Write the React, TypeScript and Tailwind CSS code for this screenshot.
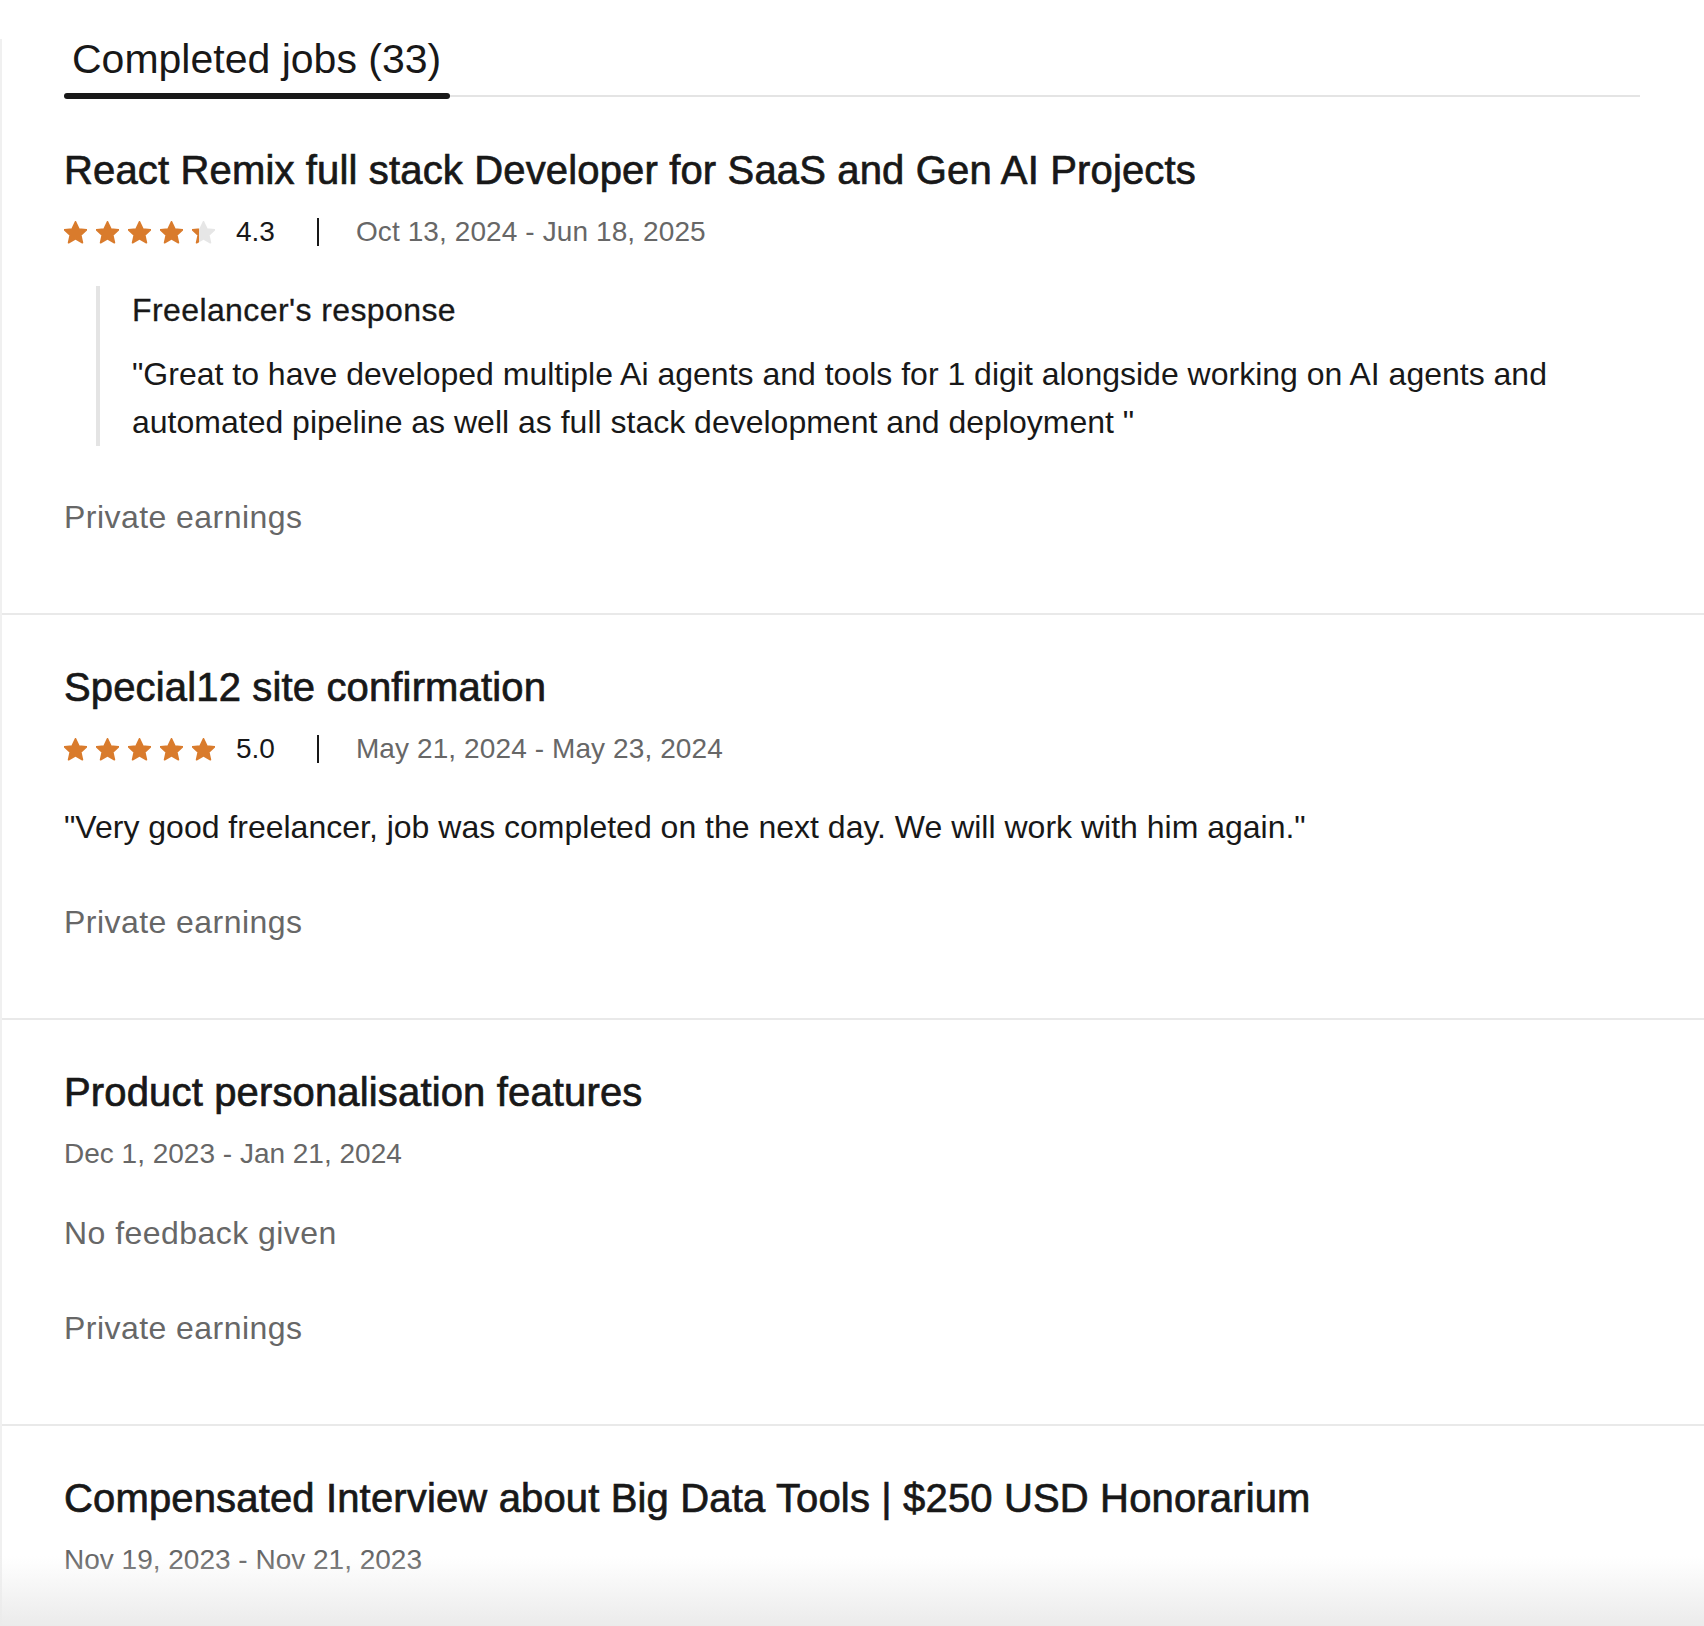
import React from "react";

const STAR = "M12 2.6l2.75 5.95 6.5.72-4.86 4.38 1.37 6.4L12 16.8l-5.76 3.25 1.37-6.4-4.86-4.38 6.5-.72z";

function Star({ fill, id }: { fill: number; id: string }) {
  return (
    <svg width="23" height="23" viewBox="2.4 2.4 19.2 18.2" className="block">
      <defs>
        <linearGradient id={id} x1="0" x2="1" y1="0" y2="0">
          <stop offset={`${fill * 100}%`} stopColor="#d97b2c" />
          <stop offset={`${fill * 100}%`} stopColor="#e6e6e6" />
        </linearGradient>
      </defs>
      <path d={STAR} fill={`url(#${id})`} stroke={`url(#${id})`} strokeWidth="1.4" strokeLinejoin="round" />
    </svg>
  );
}

function Stars({ rating, prefix }: { rating: number; prefix: string }) {
  return (
    <div className="flex items-center gap-[9px]">
      {[0, 1, 2, 3, 4].map((i) => {
        const f = Math.max(0, Math.min(1, rating - i));
        return <Star key={i} fill={f} id={`${prefix}-${i}`} />;
      })}
    </div>
  );
}

function RatingRow({ rating, label, dates, prefix }: { rating: number; label: string; dates: string; prefix: string }) {
  return (
    <div className="mt-[18px] flex h-[40px] items-center">
      <Stars rating={rating} prefix={prefix} />
      <span className="ml-[21px] text-[28px] leading-[40px] text-[#181818]">{label}</span>
      <span className="ml-[42px] h-[28px] w-[2px] bg-[#181818]" />
      <span className="ml-[37px] text-[28px] leading-[40px] tracking-[0.1px] text-[#676767]">{dates}</span>
    </div>
  );
}

function Title({ children }: { children: React.ReactNode }) {
  return (
    <h4 className="text-[40px] leading-[48px] tracking-[0.15px] text-[#181818] [-webkit-text-stroke:0.7px_#181818]">
      {children}
    </h4>
  );
}

function Earnings() {
  return <p className="mt-[47px] text-[32px] leading-[48px] tracking-[0.45px] text-[#676767]">Private earnings</p>;
}

export default function App() {
  return (
    <div className="relative h-[1626px] w-[1704px] overflow-hidden bg-white font-['Liberation_Sans',Arial,sans-serif]">
      <div className="mt-[39px] h-[1587px] border-l-2 border-[#f0f0f0]">
        {/* Section 1 */}
        <section className="border-b-2 border-[#e9e9e9] pb-[72px] pl-[62px] pr-[64px]">
          <div className="flex border-b-2 border-[#e4e4e4]">
            <div className="relative pb-[16px] pl-[8px] pr-[9px] text-[41px] leading-[40px] text-[#181818]">
              Completed jobs (33)
              <span className="absolute -bottom-[4px] left-0 right-0 h-[6px] rounded-full bg-[#181818]" />
            </div>
          </div>
          <div className="mt-[49px]">
            <Title>React Remix full stack Developer for SaaS and Gen AI Projects</Title>
          </div>
          <RatingRow rating={4.3} label="4.3" dates="Oct 13, 2024 - Jun 18, 2025" prefix="s1" />
          <div className="ml-8 mt-[34px] border-l-4 border-[#e4e4e4] pl-8">
            <p className="text-[32px] leading-[48px] tracking-[0.4px] text-[#181818] [-webkit-text-stroke:0.3px_#181818]">
              Freelancer's response
            </p>
            <p className="mt-4 text-[32px] leading-[48px] text-[#181818]">
              "Great to have developed multiple Ai agents and tools for 1 digit alongside working on AI agents and automated pipeline as well as full stack development and deployment "
            </p>
          </div>
          <Earnings />
        </section>

        {/* Section 2 */}
        <section className="border-b-2 border-[#e9e9e9] pb-[72px] pl-[62px] pr-[64px] pt-[48px]">
          <Title>Special12 site confirmation</Title>
          <RatingRow rating={5} label="5.0" dates="May 21, 2024 - May 23, 2024" prefix="s2" />
          <p className="mt-[34px] text-[32px] leading-[48px] text-[#181818]">
            "Very good freelancer, job was completed on the next day. We will work with him again."
          </p>
          <Earnings />
        </section>

        {/* Section 3 */}
        <section className="border-b-2 border-[#e9e9e9] pb-[72px] pl-[62px] pr-[64px] pt-[48px]">
          <Title>Product personalisation features</Title>
          <p className="mt-[18px] text-[28px] leading-[40px] text-[#676767]">Dec 1, 2023 - Jan 21, 2024</p>
          <p className="mt-[35px] text-[32px] leading-[48px] tracking-[0.45px] text-[#676767]">No feedback given</p>
          <Earnings />
        </section>

        {/* Section 4 */}
        <section className="pl-[62px] pr-[64px] pt-[48px]">
          <Title>Compensated Interview about Big Data Tools | $250 USD Honorarium</Title>
          <p className="mt-[18px] text-[28px] leading-[40px] text-[#676767]">Nov 19, 2023 - Nov 21, 2023</p>
        </section>
      </div>
      <div className="pointer-events-none absolute bottom-0 left-0 right-0 h-[70px] bg-linear-to-b from-white/0 to-[#ebebeb]" />
    </div>
  );
}
